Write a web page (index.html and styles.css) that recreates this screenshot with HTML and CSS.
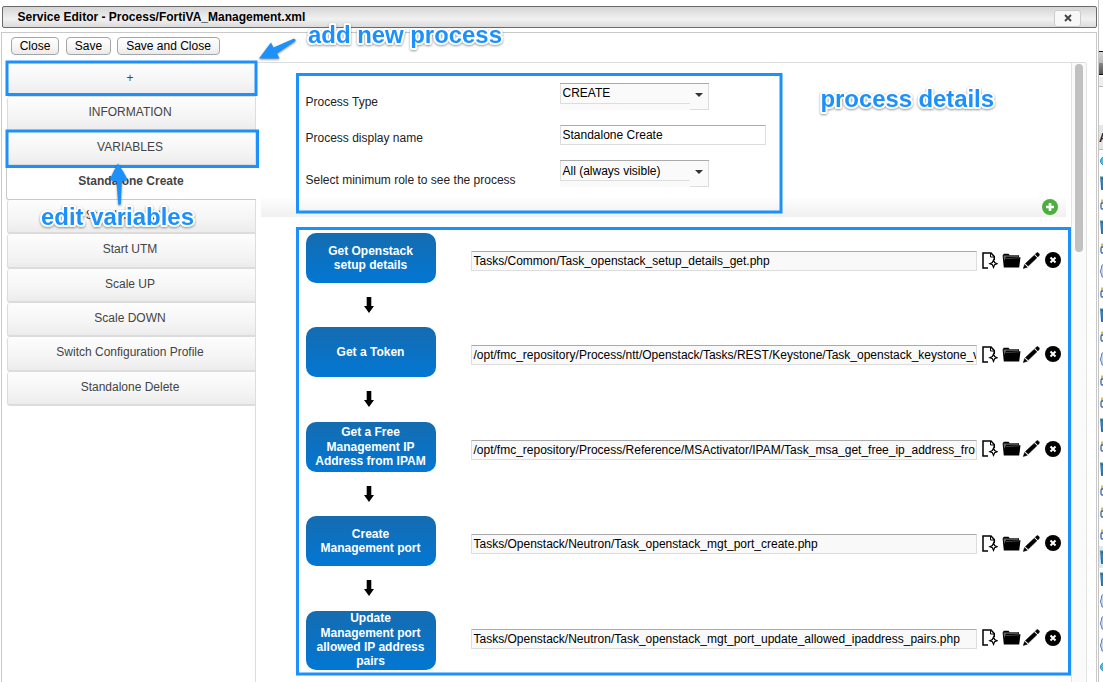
FILE: index.html
```
<!DOCTYPE html>
<html lang="en">
<head>
<meta charset="utf-8">
<title>Service Editor</title>
<link rel="stylesheet" href="styles.css">
</head>
<body>
<svg width="0" height="0" class="defs">
  <symbol id="i-new" viewBox="0 0 16 17"><path d="M6 15.900H1V1h8l3.300 3.500V8" fill="none" stroke="#000" stroke-width="1.500"/><path d="M8.500 1v4h4" fill="none" stroke="#000"/><path d="M11.500 8l1.100 2.600 2.600 1.100-2.600 1.100-1.100 2.600-1.100-2.600-2.600-1.100 2.600-1.100z" fill="#fff" stroke="#000" stroke-width="1.200"/></symbol>
  <symbol id="i-folder" viewBox="0 0 19 15"><path d="M.6 2.500L1.800.8h4.700l1.300 1.400h9.200v2h1.500l-1.300 10.200H1.800z" fill="#000"/><path d="M1.500 2.600h14.700v1.200H4L2.200 8z" fill="#666"/><path d="M3.500 5.600l13.500-.8" stroke="#444" fill="none"/></symbol>
  <symbol id="i-pencil" viewBox="0 0 17 17"><path d="M11.300 3.200l2.600 2.600-8.600 8.300-2.900-2.500zM12.200 2.300l1.500-1.500q.9-.6 1.700.2l.8.900q.6.800-.1 1.600L14.800 5zM1.600 12.500l2.800 2.700L.3 16.500z" fill="#000" stroke="#000" stroke-width=".5"/></symbol>
  <symbol id="i-remove" viewBox="0 0 16 16"><circle cx="8" cy="8" r="8" fill="#000"/><path d="M5.500 5.500l5 5m0-5l-5 5" stroke="#fff" stroke-width="2"/></symbol>
  <symbol id="i-down" viewBox="0 0 10 16"><path d="M2.700 0h4.600v9H10l-5 7-5-7h2.700z" fill="#000"/></symbol>
  <symbol id="i-trash" viewBox="0 0 4 16"><path d="M1 1.500h3v1.800H1z" fill="#3f8f78"/><path d="M1.800 3.500H4v11H2.600z" fill="#4f9bd0" stroke="#21619c"/></symbol>
  <symbol id="i-lock" viewBox="0 0 4 16"><path d="M2 2.500H4v4H2z" fill="#d9bd5b"/><path d="M4 6H3Q2 6 2 7.500v3Q2 12 3 12H4" fill="#fff" stroke="#3464ae" stroke-width="1.300"/></symbol>
  <symbol id="i-user" viewBox="0 0 4 16"><path d="M4 1.500Q2 2 2.500 5L1.500 8q0 2.500 1 3l.5 3H4" fill="#cbd8ee" stroke="#5f7db8"/></symbol>
  <symbol id="i-globe" viewBox="0 0 4 16"><circle cx="6" cy="8" r="4.500" fill="#3fc4e0" stroke="#4a87ba"/></symbol>
</svg>

<div class="screen">
  <div class="dialog">
    <header class="titlebar">
      <span>Service Editor - Process/FortiVA_Management.xml</span>
      <button class="dismiss"><svg width="8" height="8" viewBox="0 0 8 8"><path d="M1 1l6 6m0-6l-6 6" stroke="#444" stroke-width="1.900"/></svg></button>
    </header>
    <div class="dialog-body">
      <div class="toolbar"><button class="btn b-close">Close</button><button class="btn b-save">Save</button><button class="btn b-both">Save and Close</button></div>
      <div class="columns">
        <nav class="sidebar">
          <a class="tab">+</a>
          <a class="tab">INFORMATION</a>
          <a class="tab">VARIABLES</a>
          <a class="tab active">Standalone Create</a>
          <a class="tab">Standalone Stop</a>
          <a class="tab">Start UTM</a>
          <a class="tab">Scale UP</a>
          <a class="tab">Scale DOWN</a>
          <a class="tab">Switch Configuration Profile</a>
          <a class="tab">Standalone Delete</a>
        </nav>
        <main class="main">
          <section class="form">
            <div class="field f1"><label>Process Type</label><div class="select"><span>CREATE</span><i></i></div></div>
            <div class="field f2"><label>Process display name</label><div class="input name">Standalone Create</div></div>
            <div class="field f3"><label>Select minimum role to see the process</label><div class="select"><span>All (always visible)</span><i></i></div></div>
            <svg class="add" width="16" height="16" viewBox="0 0 16 16"><circle cx="8" cy="8" r="8" fill="#4cae3c"/><path d="M8 4v8M4 8h8" stroke="#fff" stroke-width="2.600"/></svg>
          </section>
          <section class="steps">
            <div class="step">
              <div class="flow"><div class="task">Get Openstack<br>setup details</div><svg class="down"><use href="#i-down"/></svg></div>
              <div class="input path">Tasks/Common/Task_openstack_setup_details_get.php</div>
              <div class="icons"><svg class="new"><use href="#i-new"/></svg><svg class="folder"><use href="#i-folder"/></svg><svg class="pencil"><use href="#i-pencil"/></svg><svg class="remove"><use href="#i-remove"/></svg></div>
            </div>
            <div class="step">
              <div class="flow"><div class="task">Get a Token</div><svg class="down"><use href="#i-down"/></svg></div>
              <div class="input path">/opt/fmc_repository/Process/ntt/Openstack/Tasks/REST/Keystone/Task_openstack_keystone_v</div>
              <div class="icons"><svg class="new"><use href="#i-new"/></svg><svg class="folder"><use href="#i-folder"/></svg><svg class="pencil"><use href="#i-pencil"/></svg><svg class="remove"><use href="#i-remove"/></svg></div>
            </div>
            <div class="step">
              <div class="flow"><div class="task">Get a Free<br>Management IP<br>Address from IPAM</div><svg class="down"><use href="#i-down"/></svg></div>
              <div class="input path">/opt/fmc_repository/Process/Reference/MSActivator/IPAM/Task_msa_get_free_ip_address_fro</div>
              <div class="icons"><svg class="new"><use href="#i-new"/></svg><svg class="folder"><use href="#i-folder"/></svg><svg class="pencil"><use href="#i-pencil"/></svg><svg class="remove"><use href="#i-remove"/></svg></div>
            </div>
            <div class="step">
              <div class="flow"><div class="task">Create<br>Management port</div><svg class="down"><use href="#i-down"/></svg></div>
              <div class="input path">Tasks/Openstack/Neutron/Task_openstack_mgt_port_create.php</div>
              <div class="icons"><svg class="new"><use href="#i-new"/></svg><svg class="folder"><use href="#i-folder"/></svg><svg class="pencil"><use href="#i-pencil"/></svg><svg class="remove"><use href="#i-remove"/></svg></div>
            </div>
            <div class="step">
              <div class="flow"><div class="task">Update<br>Management port<br>allowed IP address<br>pairs</div></div>
              <div class="input path">Tasks/Openstack/Neutron/Task_openstack_mgt_port_update_allowed_ipaddress_pairs.php</div>
              <div class="icons"><svg class="new"><use href="#i-new"/></svg><svg class="folder"><use href="#i-folder"/></svg><svg class="pencil"><use href="#i-pencil"/></svg><svg class="remove"><use href="#i-remove"/></svg></div>
            </div>
          </section>
        </main>
        <div class="track"><div class="thumb"></div></div>
      </div>
    </div>
  </div>
  <aside class="behind">
    <div class="bar"></div>
    <div class="panel-top"></div>
    <div class="colhead">A</div>
    <svg><use href="#i-globe"/></svg><svg><use href="#i-trash"/></svg><svg><use href="#i-lock"/></svg><svg><use href="#i-trash"/></svg><svg><use href="#i-lock"/></svg><svg><use href="#i-user"/></svg><svg><use href="#i-lock"/></svg><svg><use href="#i-trash"/></svg><svg><use href="#i-lock"/></svg><svg><use href="#i-user"/></svg><svg><use href="#i-lock"/></svg><svg><use href="#i-lock"/></svg><svg><use href="#i-trash"/></svg><svg><use href="#i-lock"/></svg><svg><use href="#i-trash"/></svg><svg><use href="#i-lock"/></svg><svg><use href="#i-lock"/></svg><svg><use href="#i-lock"/></svg><svg class="hl"><use href="#i-trash"/></svg><svg><use href="#i-trash"/></svg><svg><use href="#i-user"/></svg><svg><use href="#i-user"/></svg><svg><use href="#i-user"/></svg><svg><use href="#i-globe"/></svg>
  </aside>
</div>

<svg class="notes" width="1103" height="682" viewBox="0 0 1103 682">
  <g class="frames">
    <rect x="7" y="62" width="249" height="32.500"/>
    <rect x="7" y="131" width="250.500" height="35.500"/>
    <rect x="297.500" y="74.500" width="483.500" height="137.500"/>
    <rect x="297.500" y="228.500" width="772" height="445.500"/>
  </g>
  <g class="arrows">
    <path d="M259 58.500L271 42.500L273.500 47.500L293.500 38.800Q296 38.500 295.500 41L277 53.500L279.500 58.500Z"/>
    <path d="M118 163.500Q124 172 127.500 179.500Q124.500 181.500 121.800 181.500L120.800 204Q119.500 206 118.300 204L116.500 181.500Q112.500 181.500 110 179Q113.500 171 118 163.500Z"/>
  </g>
  <g class="captions">
    <text x="308" y="43" textLength="194">add new process</text>
    <text x="820.500" y="107" textLength="173.500">process details</text>
    <text x="41" y="225" textLength="153">edit variables</text>
  </g>
</svg>
</body>
</html>
```
FILE: styles.css
```
* { box-sizing: border-box; }
body { margin: 0; width: 1103px; height: 682px; overflow: hidden; position: relative; background: #fff; font: 12px/14px "Liberation Sans", Arial, sans-serif; color: #222; }
.defs { position: absolute; }
svg { display: block; flex: none; }
button { font: inherit; padding: 0; }
.screen { display: flex; height: 682px; }
.dialog { width: 1099px; flex: none; padding: 6px 1px 0 1px; display: flex; flex-direction: column; gap: 4px; border-right: 1px solid #c4c4c4; }
.titlebar { margin-left: 1px; height: 22px; border: 1px solid #6b6b6b; border-radius: 2px; background: linear-gradient(#d5d5d5, #f1f1f1 60%, #dcdcdc); display: flex; align-items: center; justify-content: space-between; padding: 0 15px 0 14.500px; font-weight: bold; color: #000; }
.dismiss { width: 27px; height: 17px; margin-top: 2px; border: 1px solid #ccc; border-radius: 3px; background: #f8f8f8; display: flex; align-items: center; justify-content: center; }
.dialog-body { flex: 1; min-height: 0; border: 1px solid #c9c9c9; border-bottom: 0; display: flex; flex-direction: column; }
.toolbar { height: 29px; flex: none; padding: 4px 0 0 9px; display: flex; gap: 7px; }
.btn { height: 18px; border: 1px solid #a5a5a5; border-radius: 4px; background: linear-gradient(#fff, #f5f5f5 60%, #eaeaea); color: #000; line-height: 16px; }
.b-close { width: 48px; }
.b-save { width: 45px; }
.b-both { width: 103px; margin-left: -1px; }
.columns { flex: 1; min-height: 0; display: flex; margin: 0 10px 0 4px; border-top: 1px solid #ddd; }
.sidebar { flex: none; width: 250px; border-right: 1px solid #ddd; display: flex; flex-direction: column; }
.tab { height: 34.300px; flex: none; margin-left: 1px; padding: 8px 3px 0 0; text-align: center; color: #444; border: 1px solid #dcdcdc; border-top: 0; border-right: 0; border-bottom-width: 2px; border-radius: 3px 0 0 3px; background: linear-gradient(#fdfdfd, #f5f5f5 60%, #ececec); }
.tab.active { margin: 0 -1px 0 0; padding-right: 1px; background: #fff; font-weight: bold; position: relative; border-bottom-width: 1px; border-color: #c9c9c9; }
.main { flex: none; width: 815px; padding-left: 5px; display: flex; flex-direction: column; }
.form { flex: none; height: 154px; width: 805px; position: relative; padding: 20px 0 0 44.500px; background: linear-gradient(#fff 86%, #f0f0f0); }
.field { display: flex; align-items: flex-start; }
.field label { width: 254.500px; }
.f1 { height: 42px; }
.f1 label { padding-top: 12px; }
.f2 { height: 35px; }
.f2 label { padding-top: 6px; }
.f3 label { padding-top: 13px; }
.select { width: 149px; height: 27px; display: flex; background: #fafafa; border-top: 1px solid #aaa; color: #000; }
.select span { width: 130px; height: 20px; border: solid #ddd; border-width: 0 0 1px 1px; padding: 2px 0 0 1.500px; }
.f3 .select span { padding-top: 3px; }
.select i { width: 19px; border: solid #ddd; border-width: 0 1px 1px 0; display: flex; justify-content: center; padding: 9px 0 0; }
.select i::before { content: ""; width: 8px; height: 4px; background: #333; clip-path: polygon(0 0, 100% 0, 50% 100%); }
.input { height: 20px; border: 1px solid #ddd; border-top-color: #aaa; border-radius: 1px; color: #000; padding: 2px 0 0 1.500px; white-space: nowrap; overflow: hidden; }
.name { width: 206px; background: #fff; }
.add { position: absolute; left: 781px; top: 136px; }
.steps { flex: none; padding: 16px 0 0 45px; }
.step { height: 94.400px; display: flex; align-items: flex-start; }
.flow { width: 165px; }
.task { width: 130px; min-height: 50px; padding-right: 1px; border-radius: 10px; display: flex; align-items: center; justify-content: center; text-align: center; background: linear-gradient(#156cb0, #0277d4); color: #fff; font-weight: bold; line-height: 14.400px; }
.step:last-child .task { height: 59px; }
.down { width: 10px; height: 16px; margin: 14px 0 0 58px; }
.path { width: 506px; margin-top: 18px; background: #f9f9f9; }
.icons { display: flex; align-items: center; height: 18px; margin: 18px 0 0 5px; }
.new { width: 16px; height: 17px; }
.folder { width: 19px; height: 15px; margin-left: 4px; }
.pencil { width: 17px; height: 17px; margin-left: 2px; }
.remove { width: 16px; height: 16px; margin-left: 5px; }
.track { flex: none; width: 16px; border: solid #e3e3e3; border-width: 0 1px; background: #fafafa; padding: 1px 0 0 3px; }
.thumb { width: 8px; height: 188px; border-radius: 4px; background: #c1c1c1; }
.behind { width: 4px; flex: none; overflow: hidden; padding-top: 51px; display: flex; flex-direction: column; }
.bar { flex: none; height: 24px; border: solid #111; border-width: 1px 0; background: linear-gradient(#d8d8d8, #bbb 48%, #888 50%, #555); }
.panel-top { flex: none; height: 48px; margin-top: 2px; border-top: 9px solid #eee; box-shadow: inset 0 1px #bbb; }
.colhead { flex: none; height: 25px; background: #e6e6e6; border-bottom: 1px solid #bbb; font-weight: bold; line-height: 26px; }
.behind svg { width: 4px; height: 22px; padding: 3px 0; }
.behind .hl { background: #d9ebf5; }
.notes { position: absolute; left: 0; top: 0; pointer-events: none; }
.frames rect { fill: none; stroke: #1c90fb; stroke-width: 3; }
.arrows path { fill: #1c90fb; filter: drop-shadow(0 1px 1px rgba(0,0,0,.45)); }
.captions text { font: bold 24px "Liberation Sans", Arial, sans-serif; fill: #1c90fb; stroke: #fff; stroke-width: 4px; stroke-linejoin: round; paint-order: stroke; filter: drop-shadow(0 1.500px 1px rgba(0,0,0,.4)); }
```
